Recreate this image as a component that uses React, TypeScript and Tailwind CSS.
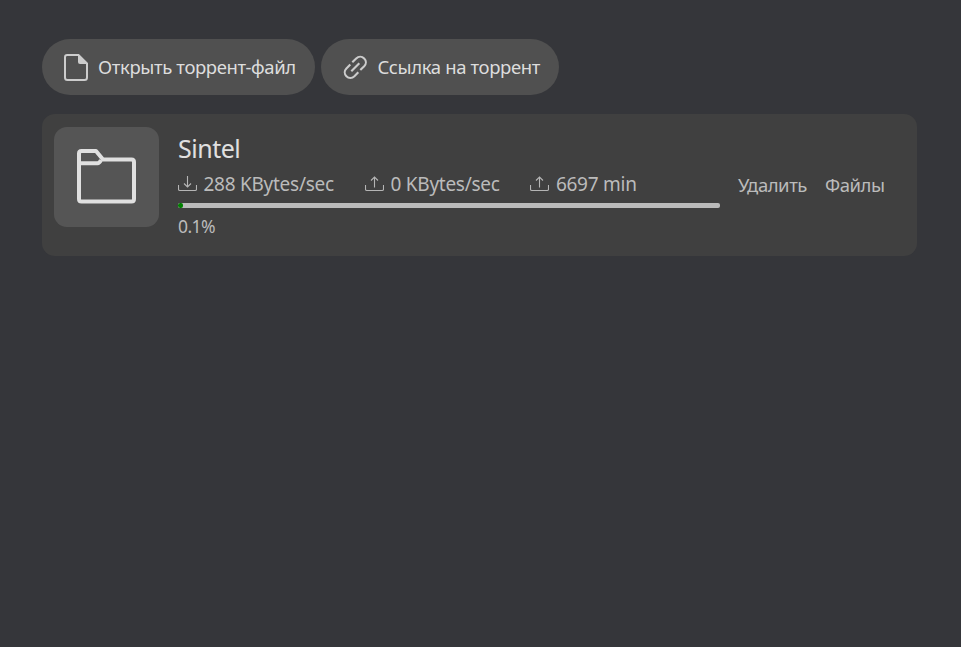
import type { ReactNode } from "react";

function FileIcon() {
  return (
    <svg className="h-[27px] w-6 shrink-0" viewBox="0 0 24 27" fill="none">
      <path d="M3.2 1H14.5L23 9.5V23.5Q23 26 20.5 26H3.5Q1 26 1 23.5V3.2Q1 1 3.2 1Z" stroke="#ccc" strokeWidth="2" />
      <path d="M14 0L24 10H16Q14 10 14 8Z" fill="#ccc" />
    </svg>
  );
}

function LinkIcon() {
  return (
    <svg className="h-6 w-6 shrink-0" viewBox="-0.5 0 24 24" fill="none" stroke="#ccc" strokeWidth="2.1">
      <path d="M8.8 7.3L12.7 3.4C15 1.2 18.5 1.2 20.7 3.4C22.9 5.6 22.9 8.9 20.7 11.2L16.8 15.1" />
      <path d="M14.8 17.3L10.9 21.2C8.6 23.4 5.1 23.4 2.9 21.2C.7 19 .7 15.7 2.9 13.4L6.8 9.5" />
      <path d="M7.8 16.2L15.8 8.2" />
    </svg>
  );
}

function TransferIcon({ down = false }: { down?: boolean }) {
  return (
    <svg className="h-4 w-[19px] shrink-0" viewBox="0 0 19 16" fill="none" stroke="#b5b5b5" strokeWidth="1.1">
      <path d="M.5 9V13.2Q.5 14.5 1.8 14.5H17.2Q18.5 14.5 18.5 13.2V9" />
      {down ? <path d="M9.5 0V11M6 7.5L9.5 11L13 7.5" /> : <path d="M9.5 11.5V1M6 4.5L9.5 1L13 4.5" />}
    </svg>
  );
}

function FolderIcon() {
  return (
    <svg className="mb-0.5 h-[55px] w-[59px]" viewBox="0 0 59 55" fill="none" stroke="#e0e0e0" strokeWidth="4" strokeLinejoin="round">
      <path d="M2 4.5Q2 2 4.5 2H19L26 10.5H54.5Q57 10.5 57 13V50Q57 52.5 54.5 52.5H4.5Q2 52.5 2 50Z" />
      <path d="M2 14.3H20.5Q22.5 14.3 24 11" />
    </svg>
  );
}

function Stat({ className, icon, children }: { className: string; icon: ReactNode; children: ReactNode }) {
  return (
    <div className={`flex shrink-0 items-center gap-[6.5px] ${className}`}>
      {icon}
      <span>{children}</span>
    </div>
  );
}

export default function App() {
  return (
    <main className="h-screen overflow-hidden bg-[#35363a] pr-11 pl-[42px] pt-[39px] font-['Noto_Sans',sans-serif] whitespace-nowrap text-[#bbb]">
      <div className="flex gap-1.5 text-[18.5px] text-[#ddd]">
        <button className="flex h-14 w-[273px] items-center gap-2.5 rounded-full bg-[#505050] pl-[22px]">
          <FileIcon />
          <span className="tracking-[-0.37px]">Открыть торрент-файл</span>
        </button>
        <button className="flex h-14 w-[238px] items-center gap-2.5 rounded-full bg-[#505050] pl-[22.4px]">
          <LinkIcon />
          <span className="tracking-[-0.37px]">Ссылка на торрент</span>
        </button>
      </div>
      <section className="mt-[19px] flex h-[142px] rounded-[13px] bg-[#404040] pt-[13px] pl-3">
        <div className="flex h-[100px] w-[105px] shrink-0 items-center justify-center rounded-[13px] bg-[#555]">
          <FolderIcon />
        </div>
        <div className="ml-[19px] w-[542px] shrink-0">
          <h1 className="mt-1.5 h-[30px] text-[25px] leading-[30px] tracking-[-0.5px] text-[#e0e0e0]">Sintel</h1>
          <div className="mt-[9px] flex h-6 text-[19px] leading-6 tracking-[-0.26px]">
            <Stat className="w-[187px]" icon={<TransferIcon down />}>288 KBytes/sec</Stat>
            <Stat className="w-[165.4px]" icon={<TransferIcon />}>0 KBytes/sec</Stat>
            <Stat className="w-[150px]" icon={<TransferIcon />}>6697 min</Stat>
          </div>
          <div className="mt-[7px] h-[5px] overflow-hidden rounded-[2px] bg-[#bbb]">
            <div className="h-full w-[5px] rounded-[2px] bg-[#008000]" />
          </div>
          <div className="mt-1.5 text-[17.5px] leading-6 tracking-[-0.6px]">0.1%</div>
        </div>
        <div className="mt-[46px] ml-[18px] flex h-6 text-[18.5px] leading-6 tracking-[-0.45px]">
          <button className="w-[87px] text-left">Удалить</button>
          <button className="text-left">Файлы</button>
        </div>
      </section>
    </main>
  );
}
